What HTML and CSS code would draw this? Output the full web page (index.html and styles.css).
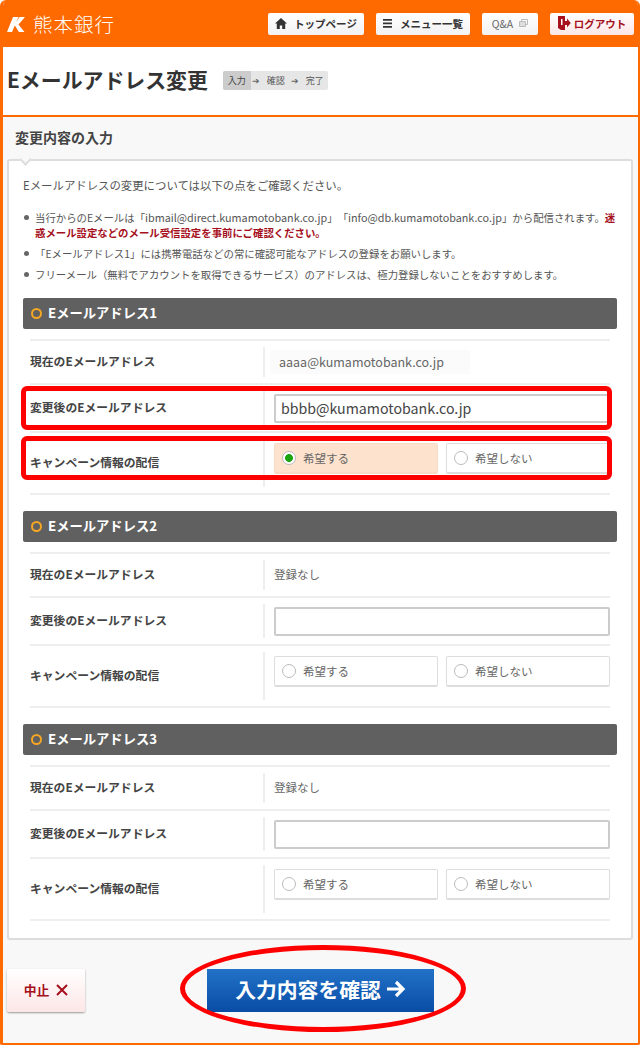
FILE: index.html
```html
<!DOCTYPE html>
<html lang="ja">
<head>
<meta charset="utf-8">
<title>Eメールアドレス変更</title>
<link rel="stylesheet" href="styles.css">
</head>
<body>
<div class="frame">
  <header class="top">
    <div class="logo">
      <svg class="logo-mark" viewBox="0 0 18 15" width="18" height="15"><path d="M6 0h5.500L5 15H0zM12.500 0H18l-6.500 7.500L17.500 15h-5.500L7.500 8z" fill="#fff"/></svg>
      <span class="logo-text">熊本銀行</span>
    </div>
    <nav class="nav">
      <a class="nav-btn nav-home"><svg viewBox="0 0 12 11" width="12" height="11"><path d="M6 0 0 5.500h1.800V11h3V7.500h2.400V11h3V5.500H12z" fill="#333"/></svg>トップページ</a>
      <a class="nav-btn nav-menu"><svg viewBox="0 0 10 9" width="10" height="9"><path d="M0 0h9v1.800H0zM0 3.500h9v1.800H0zM0 7h9v1.800H0z" fill="#333"/></svg>メニュー一覧</a>
      <a class="nav-btn nav-qa">Q&amp;A<svg viewBox="0 0 9 8" width="9" height="8"><path d="M2.500.5h6v5h-6z" fill="none" stroke="#bbb"/><path d="M.5 2.500h6v5h-6z" fill="#ddd" stroke="#bbb"/></svg></a>
      <a class="nav-btn nav-out"><svg viewBox="0 0 13 14" width="13" height="14"><path d="M0 0h7v14H3l-3-2z" fill="#a5101c"/><path d="M3 3h1.500v6H3z" fill="#fff"/><path d="M7 5h2V2.500L12.800 7 9 11.500V9H7z" fill="#a5101c"/></svg>ログアウト</a>
    </nav>
  </header>

  <div class="title-bar">
    <h1 class="page-title">Eメールアドレス変更</h1>
    <ol class="steps">
      <li class="step step-on">入力</li>
      <li class="step-arrow">➔</li>
      <li class="step">確認</li>
      <li class="step-arrow">➔</li>
      <li class="step">完了</li>
    </ol>
  </div>

  <main class="main">
    <h2 class="sub-title">変更内容の入力</h2>
    <section class="panel">
      <p class="intro">Eメールアドレスの変更については以下の点をご確認ください。</p>
      <ul class="notes">
        <li>当行からのEメールは「<span class="mail">ibmail@direct.kumamotobank.co.jp</span>」「<span class="mail">info@db.kumamotobank.co.jp</span>」から配信されます。<strong>迷惑メール設定などのメール受信設定を事前にご確認ください。</strong></li>
        <li>「Eメールアドレス1」には携帯電話などの常に確認可能なアドレスの登録をお願いします。</li>
        <li>フリーメール（無料でアカウントを取得できるサービス）のアドレスは、極力登録しないことをおすすめします。</li>
      </ul>

      <div class="group">
        <h3 class="group-head">Eメールアドレス1</h3>
        <div class="rows">
          <div class="row row-a"><div class="label">現在のEメールアドレス</div><div class="cell"><span class="value value-patch">aaaa@kumamotobank.co.jp</span></div></div>
          <div class="row row-b"><div class="label">変更後のEメールアドレス</div><div class="cell"><div class="input">bbbb@kumamotobank.co.jp</div></div></div>
          <div class="row row-c"><div class="label">キャンペーン情報の配信</div><div class="cell radios">
            <div class="radio radio-on"><i class="dot"></i>希望する</div>
            <div class="radio"><i class="dot"></i>希望しない</div>
          </div></div>
        </div>
      </div>

      <div class="group">
        <h3 class="group-head">Eメールアドレス2</h3>
        <div class="rows">
          <div class="row row-a"><div class="label">現在のEメールアドレス</div><div class="cell"><span class="value">登録なし</span></div></div>
          <div class="row row-b"><div class="label">変更後のEメールアドレス</div><div class="cell"><div class="input"></div></div></div>
          <div class="row row-c"><div class="label">キャンペーン情報の配信</div><div class="cell radios">
            <div class="radio"><i class="dot"></i>希望する</div>
            <div class="radio"><i class="dot"></i>希望しない</div>
          </div></div>
        </div>
      </div>

      <div class="group">
        <h3 class="group-head">Eメールアドレス3</h3>
        <div class="rows">
          <div class="row row-a"><div class="label">現在のEメールアドレス</div><div class="cell"><span class="value">登録なし</span></div></div>
          <div class="row row-b"><div class="label">変更後のEメールアドレス</div><div class="cell"><div class="input"></div></div></div>
          <div class="row row-c"><div class="label">キャンペーン情報の配信</div><div class="cell radios">
            <div class="radio"><i class="dot"></i>希望する</div>
            <div class="radio"><i class="dot"></i>希望しない</div>
          </div></div>
        </div>
      </div>
    </section>

    <div class="actions">
      <a class="btn-cancel">中止<svg viewBox="0 0 12 12" width="12" height="12"><path d="M1 1l10 10M11 1 1 11" stroke="#a5101c" stroke-width="2" fill="none"/></svg></a>
      <a class="btn-confirm">入力内容を確認<svg viewBox="0 0 20 18" width="20" height="18"><path d="M1 9h16M10 2l7 7-7 7" stroke="#fff" stroke-width="3.200" fill="none"/></svg></a>
    </div>
  </main>

  <div class="mark mark-one"></div>
  <div class="mark mark-two"></div>
  <div class="mark mark-oval"></div>
</div>
</body>
</html>
```

FILE: styles.css
```css
*, *::before, *::after { box-sizing: border-box; }
html, body { margin: 0; padding: 0; background: #fff; }
body { font-family: "Noto Sans CJK JP", "Noto Sans", sans-serif; color: #555; text-spacing-trim: space-all; }
.frame { position: relative; width: 640px; height: 1045px; border: solid #ff6a00; border-width: 0 2px 2px 3px; border-radius: 6px 6px 2px 2px; background: #f8f8f8; display: flex; flex-direction: column; overflow: hidden; }

.top { height: 47px; margin: 0 -2px 0 -3px; background: #ff6a00; display: flex; align-items: flex-start; justify-content: space-between; padding: 13px 6px 0 7px; }
.logo { display: flex; align-items: center; gap: 8px; height: 22px; }
.logo-mark { display: block; }
.logo-text { color: #fff; font-size: 19.500px; line-height: 22px; letter-spacing: 1px; font-weight: 300; }
.nav { display: flex; gap: 12px; }
.nav-btn { height: 22px; padding-bottom: 2px; border-radius: 2px; background: linear-gradient(#fff, #f2f2f2); display: flex; align-items: center; justify-content: center; font-size: 10.500px; font-weight: 700; color: #333; white-space: nowrap; }
.nav-home { width: 96px; gap: 7px; }
.nav-menu { width: 94px; gap: 7px; }
.nav-qa { width: 56px; gap: 6px; font-weight: 400; color: #666; }
.nav-out { width: 84px; gap: 3px; background: linear-gradient(#fff, #fde6e6); color: #a5101c; }

.title-bar { height: 70px; background: #fff; border-bottom: 2px solid #ff6a00; display: flex; align-items: center; padding: 0 0 2px 4px; gap: 15px; }
.page-title { margin: -2px 0 0; font-size: 20.900px; line-height: 28px; font-weight: 700; color: #333; white-space: nowrap; }
.steps { list-style: none; margin: 0; padding: 0; display: flex; align-items: center; height: 19px; width: 105px; background: #e6e6e6; border-radius: 2px; font-size: 9px; color: #555; overflow: hidden; white-space: nowrap; }
.step { flex: none; width: 28px; text-align: center; line-height: 19px; }
.step-on { background: #ccc; color: #444; }
.step-arrow { flex: none; width: 11px; text-align: center; font-size: 9px; color: #666; }

.main { flex: 1; display: flex; flex-direction: column; padding: 0 5px 0 4px; }
.sub-title { margin: 0; height: 42px; padding: 10px 0 0 8px; font-size: 14px; line-height: 20px; font-weight: 700; color: #444; }

.panel { position: relative; height: 781px; background: #fff; border: 2px solid #ddd; border-radius: 3px; padding: 15px 14px 0; }
.panel::before { content: ""; position: absolute; left: 12px; top: -6px; width: 9px; height: 9px; background: #f8f8f8; border: solid #ddd; border-width: 0 2px 2px 0; transform: rotate(45deg); }
.intro { margin: 0 0 16px; font-size: 11.400px; line-height: 18px; color: #555; }
.notes { list-style: none; margin: 0; padding: 0; font-size: 10.400px; line-height: 15px; color: #555; }
.notes li { position: relative; padding-left: 12px; margin-bottom: 6px; }
.notes li::before { content: ""; position: absolute; left: 1px; top: 5px; width: 5px; height: 5px; border-radius: 50%; background: #666; }
.notes strong { color: #a5101c; font-weight: 700; }
.mail { font-size: 10.800px; }

.group { margin-bottom: 16px; }
.notes + .group { margin-top: 16px; }
.group-head { position: relative; margin: 0 0 10px; height: 31px; background: #606060; border-radius: 2px; padding-left: 25px; font-size: 13.300px; line-height: 30px; font-weight: 700; color: #fff; }
.group-head::before { content: ""; position: absolute; left: 8px; top: 10px; width: 11px; height: 11px; border: 2px solid #f5a623; border-radius: 50%; }
.rows { margin: 0 7px; border-bottom: 2px solid #eee; }
.row { display: grid; grid-template-columns: 233px 1fr; border-top: 2px solid #eee; align-items: center; }
.row-a { height: 44px; }
.row-b { height: 48px; }
.row-c { height: 62px; }
.label { margin-bottom: 2px; font-size: 11.800px; font-weight: 700; color: #444; line-height: 16px; white-space: nowrap; }
.cell { align-self: stretch; margin: 6px 0; border-left: 2px solid #eee; padding-left: 9px; display: flex; align-items: center; }
.value { padding-bottom: 3px; font-size: 11.500px; color: #666; }
.value-patch { display: block; width: 200px; margin-left: -4px; padding: 3px 0 3px 9px; line-height: 18px; background: #fbfbfb; font-size: 12.500px; }
.input { width: 336px; height: 29px; background: #fff; border: 2px solid #ccc; border-radius: 2px; padding-left: 5px; font-size: 14.200px; line-height: 24px; color: #444; }
.radios { align-items: flex-start; gap: 8px; padding-top: 4px; }
.radio { width: 164px; height: 31px; background: #fff; border: 1px solid #ddd; border-bottom-width: 2px; border-radius: 2px; display: flex; align-items: center; padding-left: 7px; font-size: 11.500px; color: #666; }
.dot { width: 14px; height: 14px; margin-right: 7px; border: 1px solid #bbb; border-radius: 50%; background: #fff; flex: none; }
.radio-on { background: #fde3cd; border-color: #f6dcc6; }
.radio-on .dot { background: radial-gradient(circle, #1aa510 0 3.600px, #fff 4.200px); }

.actions { display: flex; align-items: flex-start; padding-top: 29px; }
.btn-cancel { width: 78px; height: 43px; padding-bottom: 2px; margin-right: 122px; border-radius: 2px; background: linear-gradient(#fff, #fde6e6); box-shadow: 0 1px 2px #999; display: flex; align-items: center; justify-content: center; gap: 7px; font-size: 12.800px; font-weight: 700; color: #a5101c; }
.btn-confirm { width: 227px; height: 43px; padding-bottom: 3px; background: linear-gradient(#2272c8, #094ca6); display: flex; align-items: center; justify-content: center; gap: 5px; font-size: 20.800px; font-weight: 700; color: #fff; white-space: nowrap; }

.mark { position: absolute; border: 5px solid #f00; }
.mark-one { left: 18px; top: 386px; width: 591px; height: 44px; border-radius: 6px; }
.mark-two { left: 18px; top: 436px; width: 591px; height: 44px; border-radius: 6px; }
.mark-oval { left: 177px; top: 945px; width: 286px; height: 87px; border-radius: 50%; }
```
